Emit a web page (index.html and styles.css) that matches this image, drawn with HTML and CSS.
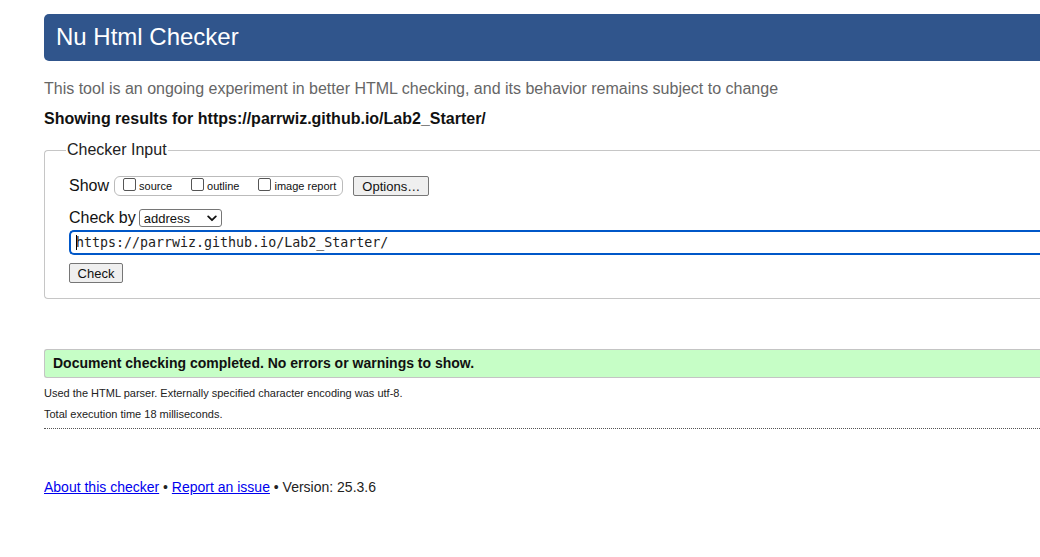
FILE: index.html
```html
<!DOCTYPE html>
<html lang="en">
<head>
<meta charset="utf-8">
<title>Nu Html Checker</title>
<link rel="stylesheet" href="styles.css">
</head>
<body>
<div class="page">
  <h1 class="title">Nu Html Checker</h1>
  <p class="intro">This tool is an ongoing experiment in better HTML checking, and its behavior remains subject to change</p>
  <p class="showing">Showing results for https://parrwiz.github.io/Lab2_Starter/</p>
  <fieldset class="input-box">
    <legend class="legend">Checker Input</legend>
    <div class="row show-row">
      <span class="label">Show</span>
      <span class="show-group">
        <label class="opt"><span class="cb"></span>source</label>
        <label class="opt"><span class="cb"></span>outline</label>
        <label class="opt"><span class="cb"></span>image report</label>
      </span>
      <span class="btn options">Options…</span>
    </div>
    <div class="row checkby-row">
      <span class="label">Check by</span>
      <span class="select">address<svg class="chev" width="10" height="7" viewBox="0 0 10 7"><path d="M1.2 1.4 L5 5.2 L8.8 1.4" fill="none" stroke="#111" stroke-width="1.8" stroke-linecap="round" stroke-linejoin="round"/></svg></span>
    </div>
    <div class="url"><span class="caret"></span>https://parrwiz.github.io/Lab2_Starter/</div>
    <span class="btn check">Check</span>
  </fieldset>
  <div class="success">Document checking completed. No errors or warnings to show.</div>
  <p class="details">Used the HTML parser. Externally specified character encoding was utf-8.</p>
  <p class="details">Total execution time 18 milliseconds.</p>
  <hr class="dotted">
  <p class="footer"><a href="#">About this checker</a> • <a href="#">Report an issue</a> • Version: 25.3.6</p>
</div>
</body>
</html>
```
FILE: styles.css
```css
html, body {
  margin: 0;
  padding: 0;
  background: #fff;
  overflow: hidden;
}
body {
  font-family: "Liberation Sans", Arial, sans-serif;
  color: #111;
}
.page {
  width: 1100px;
  padding: 14px 0 0 44px;
}
.title {
  margin: 0;
  height: 47px;
  line-height: 46px;
  padding: 0 12px;
  font-size: 24px;
  font-weight: normal;
  color: #fff;
  background: #30558c;
  border-radius: 5px 0 0 5px;
}
.intro {
  margin: 19px 0 0;
  font-size: 16px;
  line-height: 18px;
  color: #666;
}
.showing {
  margin: 12px 0 0;
  font-size: 16px;
  line-height: 18px;
  font-weight: bold;
  color: #111;
}
.input-box {
  margin: 13px 0 0;
  padding: 8px 0 15px 24px;
  border: 1px solid #c6c6c6;
  border-right: none;
  border-radius: 4px 0 0 4px;
}
.legend {
  font-size: 16px;
  padding: 0 1px;
  margin-left: -3px;
  color: #222;
}
.row {
  display: flex;
  align-items: center;
}
.label {
  font-size: 16px;
  color: #111;
}
.show-row {
  height: 22px;
  margin-top: 8px;
}
.show-group {
  display: inline-flex;
  align-items: center;
  margin-left: 5px;
  height: 18px;
  padding: 0 6px 0 8px;
  border: 1px solid #bbb;
  border-radius: 6px;
  font-size: 11px;
}
.opt {
  display: inline-flex;
  align-items: center;
  margin-right: 19px;
  color: #111;
}
.opt:last-child {
  margin-right: 0;
}
.cb {
  display: inline-block;
  width: 11px;
  height: 11px;
  border: 1px solid #555;
  border-radius: 2px;
  margin-right: 3px;
  margin-top: -3px;
}
.btn {
  display: inline-flex;
  align-items: center;
  justify-content: center;
  font-size: 13px;
  color: #111;
  background: #efefef;
  border: 1px solid #767676;
  border-radius: 2px;
  height: 18px;
}
.options {
  margin-left: 10px;
  width: 74px;
}
.checkby-row {
  margin-top: 11px;
  height: 20px;
}
.select {
  display: inline-flex;
  align-items: center;
  justify-content: space-between;
  margin-left: 3px;
  width: 73px;
  height: 16px;
  padding: 0 4px;
  font-size: 13px;
  border: 1px solid #767676;
  border-radius: 3px;
  background: #fff;
}
.chev {
  display: block;
}
.url {
  position: relative;
  margin-top: 2px;
  height: 21px;
  line-height: 21px;
  padding: 0 0 0 5px;
  border: 2px solid #0057c8;
  border-right: none;
  border-radius: 5px 0 0 5px;
  font-family: "DejaVu Sans Mono", "Liberation Mono", monospace;
  font-size: 13.3px;
  color: #222;
}
.caret {
  position: absolute;
  left: 5px;
  top: 3px;
  width: 1px;
  height: 15px;
  background: #000;
}
.check {
  margin-top: 8px;
  width: 52px;
}
.success {
  margin-top: 50px;
  height: 27px;
  line-height: 27px;
  padding-left: 8px;
  background: #c6fec6;
  border: 1px solid #c4c4c4;
  border-right: none;
  border-radius: 3px 0 0 3px;
  font-size: 14px;
  font-weight: bold;
  color: #111;
}
.details {
  margin: 9px 0 0;
  font-size: 11px;
  line-height: 13px;
  color: #222;
}
.details + .details {
  margin-top: 8px;
}
.dotted {
  margin: 7px 0 0;
  border: none;
  border-top: 1px dotted #555;
  height: 0;
}
.footer {
  margin: 50px 0 0;
  font-size: 14px;
  color: #222;
}
.footer a {
  color: #0000ee;
  text-decoration: underline;
}
```
